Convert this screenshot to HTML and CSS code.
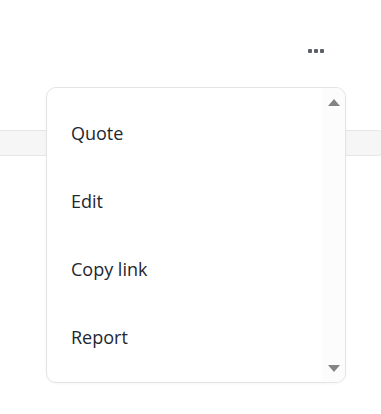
FILE: index.html
```html
<!DOCTYPE html>
<html lang="en">
<head>
    <meta charset="UTF-8">
    <meta name="viewport" content="width=device-width, initial-scale=1.0">
    <title>Post menu</title>
    <link rel="stylesheet" href="styles.css">
</head>
<body>
    <div class="page">
        <div class="post-header">
            <button type="button" class="more-button" aria-label="More">
                <span class="dot"></span><span class="dot"></span><span class="dot"></span>
            </button>
        </div>

        <div class="post-band"></div>

        <div class="menu">
            <ul class="menu-list">
                <li class="menu-item">Quote</li>
                <li class="menu-item">Edit</li>
                <li class="menu-item">Copy link</li>
                <li class="menu-item">Report</li>
            </ul>
            <div class="menu-scroll">
                <span class="arrow arrow-up"></span>
                <span class="arrow arrow-down"></span>
            </div>
        </div>
    </div>
</body>
</html>
```

FILE: styles.css
```css
body {
    font-family: "Open Sans", "Noto Sans", sans-serif;
    margin: 0;
    padding: 0;
    background-color: #fff;
    overflow: hidden;
}
.page {
    position: relative;
    height: 414px;
}
.post-header {
    display: flex;
    justify-content: flex-end;
    height: 100px;
    padding-right: 55px;
    padding-top: 39px;
    box-sizing: border-box;
}
.more-button {
    display: flex;
    gap: 2px;
    align-items: center;
    height: 24px;
    padding: 0 2px;
    border: none;
    background: none;
    cursor: pointer;
}
.dot {
    width: 4px;
    height: 4px;
    border-radius: 1px;
    background-color: #5c6068;
}
.post-band {
    margin-top: 30px;
    height: 24px;
    margin-right: -4px;
    background-color: #f6f6f6;
    border-top: 1px solid #e6e6e6;
    border-bottom: 1px solid #e6e6e6;
    border-radius: 0 8px 8px 0;
}
/* dropdown sits over the post */
.menu {
    position: absolute;
    top: 87px;
    left: 46px;
    width: 300px;
    height: 296px;
    box-sizing: border-box;
    display: flex;
    background-color: #fff;
    border: 1px solid #e4e4e4;
    border-radius: 10px;
    box-shadow: 0 1px 3px rgba(0, 0, 0, 0.04);
    overflow: hidden;
}
.menu-list {
    flex: 1;
    list-style: none;
    margin: 0;
    padding: 11px 0;
}
.menu-item {
    height: 68px;
    display: flex;
    align-items: center;
    padding-left: 24px;
    font-size: 18px;
    color: #232730;
}
.menu-scroll {
    width: 23px;
    display: flex;
    flex-direction: column;
    justify-content: space-between;
    align-items: center;
    padding: 11px 0 10px;
    background-color: #fcfcfc;
}
.arrow {
    width: 0;
    height: 0;
    border-left: 6px solid transparent;
    border-right: 6px solid transparent;
}
.arrow-up {
    border-bottom: 7px solid #848484;
}
.arrow-down {
    border-top: 7px solid #848484;
}
```
